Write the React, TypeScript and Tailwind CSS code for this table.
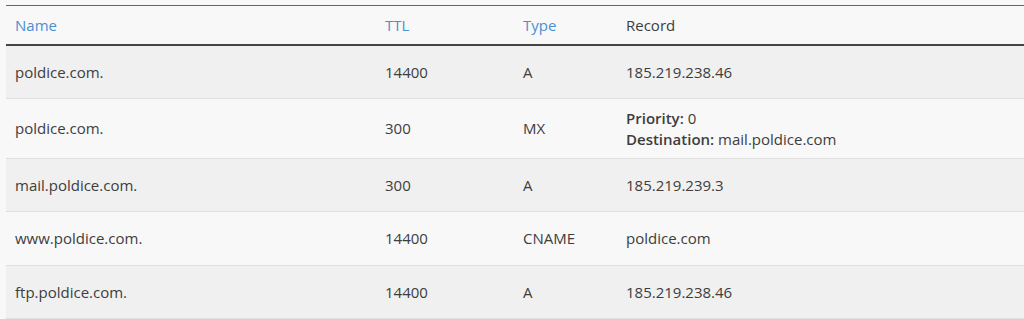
import React from 'react';

type Rec = { name: string; ttl: string; type: string; record: React.ReactNode };

const records: Rec[] = [
  { name: 'poldice.com.', ttl: '14400', type: 'A', record: '185.219.238.46' },
  {
    name: 'poldice.com.',
    ttl: '300',
    type: 'MX',
    record: (
      <div className="leading-[21px]">
        <div><span className="font-semibold">Priority:</span> 0</div>
        <div><span className="font-semibold">Destination:</span> mail.poldice.com</div>
      </div>
    ),
  },
  { name: 'mail.poldice.com.', ttl: '300', type: 'A', record: '185.219.239.3' },
  { name: 'www.poldice.com.', ttl: '14400', type: 'CNAME', record: 'poldice.com' },
  { name: 'ftp.poldice.com.', ttl: '14400', type: 'A', record: '185.219.238.46' },
];

const rowHeights = ['h-[54px]', 'h-[60px]', 'h-[53px]', 'h-[54px]', 'h-[53px]'];

export default function App() {
  return (
    <div className="w-[1024px] h-[319px] overflow-hidden bg-[#f8f8f8] pt-[5px] pl-[6px] font-['Open_Sans',sans-serif] text-[15px] text-[#3d3d3d]">
      <table className="w-[1030px] border-collapse table-fixed">
        <colgroup>
          <col className="w-[370px]" />
          <col className="w-[138px]" />
          <col className="w-[103px]" />
          <col />
        </colgroup>
        <thead>
          <tr className="h-[39px] border-t border-t-[#666] border-b-2 border-b-[#444]">
            <th className="text-left font-normal pl-[9px] text-[#4a90d0]">Name</th>
            <th className="text-left font-normal pl-[9px] text-[#4a90d0]">TTL</th>
            <th className="text-left font-normal pl-[9px] text-[#4a90d0]">Type</th>
            <th className="text-left font-normal pl-[9px] text-[#3d3d3d]">Record</th>
          </tr>
        </thead>
        <tbody>
          {records.map((r, i) => (
            <tr
              key={i}
              className={`${rowHeights[i]} border-b border-[#e0e0e0] ${i % 2 === 0 ? 'bg-[#f0f0f0]' : 'bg-[#f8f8f8]'}`}
            >
              <td className="pl-[9px] align-middle">{r.name}</td>
              <td className="pl-[9px] align-middle">{r.ttl}</td>
              <td className="pl-[9px] align-middle">{r.type}</td>
              <td className="pl-[9px] align-middle">{r.record}</td>
            </tr>
          ))}
        </tbody>
      </table>
    </div>
  );
}
